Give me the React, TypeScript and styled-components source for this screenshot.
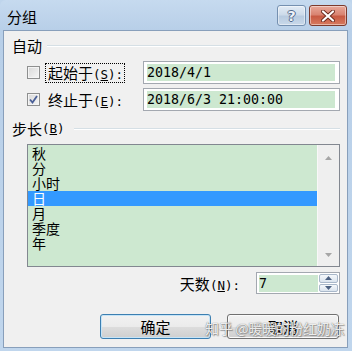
import React from "react";
import styled, { createGlobalStyle } from "styled-components";

const GlobalStyle = createGlobalStyle`
  html, body {
    margin: 0;
    padding: 0;
    background: #bfd5ec;
  }
  body {
    font-family: "Noto Sans CJK SC", sans-serif;
    color: #000;
  }
`;

const Window = styled.div`
  position: relative;
  width: 352px;
  height: 351px;
  box-sizing: border-box;
  display: flex;
  flex-direction: column;
  background: linear-gradient(#c6daef, #b8cfe8 30px, #c0d6ed);
  border-radius: 6px 6px 0 0;
  overflow: hidden;
`;

const TitleBar = styled.div`
  height: 30px;
  flex: none;
  display: flex;
  align-items: flex-start;
  padding: 0 5px 0 7px;
`;

const Title = styled.div`
  flex: 1;
  margin-top: 9px;
  font-size: 15px;
  line-height: 16px;
`;

const CaptionButton = styled.div<{ $kind: "help" | "close" }>`
  margin-top: 5px;
  margin-left: ${(p) => (p.$kind === "close" ? 3 : 0)}px;
  width: ${(p) => (p.$kind === "close" ? 38 : 29)}px;
  height: 21px;
  box-sizing: border-box;
  display: flex;
  align-items: center;
  justify-content: center;
  border-radius: 3px;
  border: 1px solid ${(p) => (p.$kind === "close" ? "#7d3a2c" : "#7590b0")};
  box-shadow: inset 0 0 0 1px rgba(255, 255, 255, 0.45);
  background: ${(p) =>
    p.$kind === "close"
      ? "linear-gradient(#e9a99a, #d98472 45%, #c85a43 55%, #d77a5e)"
      : "linear-gradient(#e3ecf6, #cddbea 45%, #b8cbe0 55%, #c9d9ea)"};
`;

const HelpMark = styled.span`
  font-family: "DejaVu Sans", sans-serif;
  font-weight: bold;
  font-size: 14px;
  line-height: 14px;
  color: #eef3f9;
  text-shadow: -1px 0 #52698a, 1px 0 #52698a, 0 -1px #52698a, 0 1px #52698a;
`;

const Client = styled.div`
  flex: 1;
  margin: 0 4px 3px 3px;
  background: #f0f0f0;
  border: 1px solid #889fbb;
  padding: 6px 7px 0 8px;
  display: flex;
  flex-direction: column;
`;

const GroupHeader = styled.div<{ $top?: number }>`
  display: flex;
  align-items: center;
  height: 18px;
  margin-top: ${(p) => p.$top ?? 0}px;
  font-size: 15px;
  line-height: 18px;
`;

const GroupLine = styled.div<{ $gap: number }>`
  flex: 1;
  margin-left: ${(p) => p.$gap}px;
  border-top: 1px solid #d5dfe5;
  border-bottom: 1px solid #fff;
`;

const Hot = styled.span`
  font-family: "DejaVu Sans Mono", monospace;
  font-size: 12.5px;
`;

const Row = styled.div<{ $top: number }>`
  display: flex;
  align-items: center;
  height: 23px;
  margin-top: ${(p) => p.$top}px;
  padding-left: 15px;
`;

const CheckBox = styled.span`
  width: 13px;
  height: 13px;
  box-sizing: border-box;
  border: 1px solid #8e8f8f;
  background: linear-gradient(135deg, #d8d8d8, #f6f6f6);
  box-shadow: inset 0 0 0 1px #f4f4f4;
  display: flex;
  align-items: center;
  justify-content: center;
  flex: none;
`;

const CheckLabel = styled.span<{ $focused?: boolean }>`
  margin-left: 5px;
  padding: 0 1px 0 2px;
  height: 18px;
  line-height: 18px;
  font-size: 15px;
  border: 1px dotted ${(p) => (p.$focused ? "#000" : "transparent")};
  white-space: nowrap;
`;

const TextBox = styled.div`
  margin-left: auto;
  width: 197px;
  height: 23px;
  box-sizing: border-box;
  border: 1px solid #a3a8b0;
  background: #fff;
  padding: 2px 4px 2px 3px;
  display: flex;
`;

const Field = styled.div`
  flex: 1;
  background: #cde8d0;
  font-family: "DejaVu Sans Mono", monospace;
  font-size: 13.3px;
  line-height: 17px;
  white-space: nowrap;
`;

const ListBox = styled.div`
  margin: 6px 0 0 15px;
  height: 123px;
  box-sizing: border-box;
  border: 1px solid #828790;
  display: flex;
`;

const Items = styled.div`
  flex: 1;
  background: #cde8d0;
  padding-top: 1px;
`;

const Item = styled.div<{ $selected?: boolean }>`
  height: 15px;
  line-height: 15px;
  font-size: 14px;
  padding-left: 4px;
  background: ${(p) => (p.$selected ? "#3399ff" : "transparent")};
  color: ${(p) => (p.$selected ? "#fff" : "#000")};
`;

const ScrollBar = styled.div`
  width: 21px;
  background: #efefef;
  border-left: 1px solid #f8f8f8;
  display: flex;
  flex-direction: column;
  justify-content: space-between;
  align-items: center;
  padding: 11px 0 9px;
`;

const SpinRow = styled.div`
  display: flex;
  justify-content: flex-end;
  align-items: center;
  margin-top: 5px;
  height: 22px;
  gap: 16px;
`;

const SpinLabel = styled.span`
  font-size: 15px;
  white-space: nowrap;
`;

const Spin = styled.div`
  width: 84px;
  height: 22px;
  box-sizing: border-box;
  border: 1px solid #a3a8b0;
  background: #fff;
  padding: 2px 1px 1px 2px;
  display: flex;
`;

const SpinButtons = styled.div`
  width: 19px;
  margin: -1px 0 0 1px;
  display: flex;
  flex-direction: column;
  gap: 1px;
`;

const SpinButton = styled.div`
  flex: 1;
  border: 1px solid #a9b8ca;
  border-radius: 2px;
  background: linear-gradient(#f5f8fb, #dbe4ee);
  display: flex;
  align-items: center;
  justify-content: center;
`;

const ButtonRow = styled.div`
  display: flex;
  justify-content: flex-end;
  gap: 16px;
  margin-top: 20px;
  padding-right: 1px;
`;

const Button = styled.div<{ $default?: boolean; $width: number }>`
  width: ${(p) => p.$width}px;
  height: 25px;
  box-sizing: border-box;
  border: 1px solid ${(p) => (p.$default ? "#3c7fb1" : "#707070")};
  border-radius: 3px;
  box-shadow: inset 0 0 0 1px ${(p) => (p.$default ? "#c6e4f7" : "#fbfbfb")};
  background: linear-gradient(#f2f2f2, #ebebeb 50%, #dddddd 51%, #cfcfcf);
  display: flex;
  align-items: center;
  justify-content: center;
  font-size: 15px;
`;

const Watermark = styled.div`
  position: absolute;
  left: 205px;
  top: 320px;
  font-size: 14px;
  line-height: 16px;
  letter-spacing: -0.3px;
  white-space: nowrap;
  color: rgba(255, 255, 255, 0.9);
  text-shadow: 0 0 1px rgba(60, 60, 60, 0.8), 1px 1px 1px rgba(90, 90, 90, 0.5);
`;

function Arrow({ up, color }: { up: boolean; color: string }) {
  return (
    <svg width="7" height="4" viewBox="0 0 7 4">
      <path d={up ? "M0 4 L3.5 0 L7 4 Z" : "M0 0 L7 0 L3.5 4 Z"} fill={color} />
    </svg>
  );
}

function Check({ checked }: { checked?: boolean }) {
  return (
    <CheckBox>
      {checked && (
        <svg width="9" height="9" viewBox="0 0 9 9">
          <path d="M1 4.5 L3.5 7.5 L8 1" fill="none" stroke="#4a5f97" strokeWidth="1.8" />
        </svg>
      )}
    </CheckBox>
  );
}

const steps = ["秋", "分", "小时", "日", "月", "季度", "年"];

export default function App() {
  return (
    <>
      <GlobalStyle />
      <Window>
        <TitleBar>
          <Title>分组</Title>
          <CaptionButton $kind="help">
            <HelpMark>?</HelpMark>
          </CaptionButton>
          <CaptionButton $kind="close">
            <svg width="14" height="12" viewBox="0 0 14 12">
              <path d="M2 1.5 L12 10.5 M12 1.5 L2 10.5" stroke="#6b2a1e" strokeWidth="4" strokeLinecap="round" />
              <path d="M2 1.5 L12 10.5 M12 1.5 L2 10.5" stroke="#fff" strokeWidth="2.2" strokeLinecap="round" />
            </svg>
          </CaptionButton>
        </TitleBar>
        <Client>
          <GroupHeader>
            自动
            <GroupLine $gap={5} />
          </GroupHeader>
          <Row $top={6}>
            <Check />
            <CheckLabel $focused>
              起始于<Hot>(<u>S</u>):</Hot>
            </CheckLabel>
            <TextBox>
              <Field>2018/4/1</Field>
            </TextBox>
          </Row>
          <Row $top={4}>
            <Check checked />
            <CheckLabel>
              终止于<Hot>(<u>E</u>):</Hot>
            </CheckLabel>
            <TextBox>
              <Field>2018/6/3 21:00:00</Field>
            </TextBox>
          </Row>
          <GroupHeader $top={9}>
            步长<Hot>(<u>B</u>)</Hot>
            <GroupLine $gap={9} />
          </GroupHeader>
          <ListBox>
            <Items>
              {steps.map((s) => (
                <Item key={s} $selected={s === "日"}>
                  {s}
                </Item>
              ))}
            </Items>
            <ScrollBar>
              <Arrow up color="#a6a6a6" />
              <Arrow up={false} color="#a6a6a6" />
            </ScrollBar>
          </ListBox>
          <SpinRow>
            <SpinLabel>
              天数<Hot>(<u>N</u>):</Hot>
            </SpinLabel>
            <Spin>
              <Field>7</Field>
              <SpinButtons>
                <SpinButton>
                  <Arrow up color="#4d6282" />
                </SpinButton>
                <SpinButton>
                  <Arrow up={false} color="#4d6282" />
                </SpinButton>
              </SpinButtons>
            </Spin>
          </SpinRow>
          <ButtonRow>
            <Button $default $width={111}>确定</Button>
            <Button $width={112}>取消</Button>
          </ButtonRow>
        </Client>
        <Watermark>知乎 @暖暖的粉红奶冻</Watermark>
      </Window>
    </>
  );
}
